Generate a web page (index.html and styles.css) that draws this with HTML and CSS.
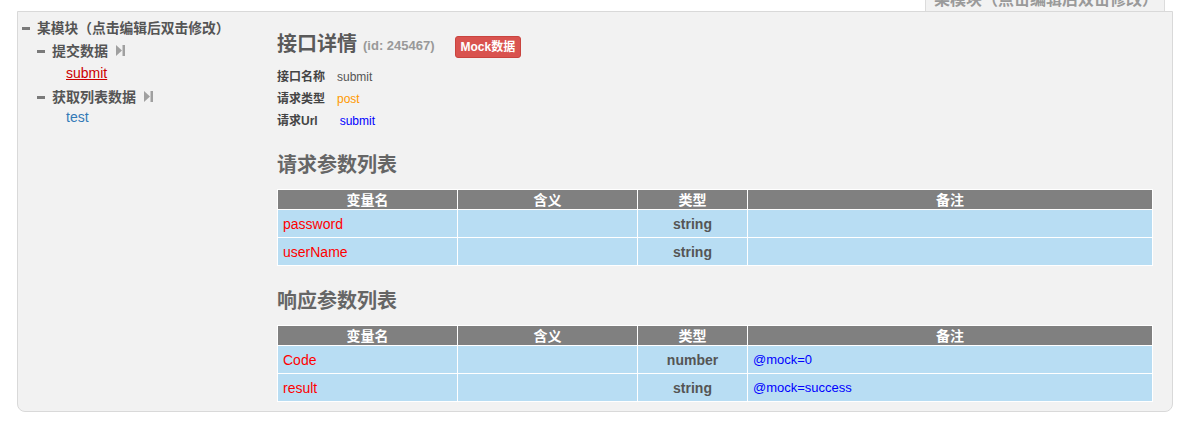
FILE: index.html
```html
<!DOCTYPE html>
<html lang="zh-CN">
<head>
<meta charset="utf-8">
<title>接口详情</title>
<link rel="stylesheet" href="styles.css">
</head>
<body>
<div class="wrap">
  <div class="tabs">
    <div class="tab">某模块（点击编辑后双击修改）</div>
  </div>
  <div class="panel">
    <div class="tree">
      <div class="node root"><span class="minus"></span>某模块（点击编辑后双击修改）</div>
      <div class="node group"><span class="minus"></span>提交数据<svg class="play" width="9" height="11" viewBox="0 0 9 11"><polygon points="0,0 6,5.5 0,11" fill="#a0a0a0"/><rect x="6.5" y="0" width="2.5" height="11" fill="#a0a0a0"/></svg></div>
      <div class="leaf"><a class="link active" href="#">submit</a></div>
      <div class="node group g2"><span class="minus"></span>获取列表数据<svg class="play" width="9" height="11" viewBox="0 0 9 11"><polygon points="0,0 6,5.5 0,11" fill="#a0a0a0"/><rect x="6.5" y="0" width="2.5" height="11" fill="#a0a0a0"/></svg></div>
      <div class="leaf last"><a class="link" href="#">test</a></div>
    </div>
    <div class="detail">
      <div class="title-row">
        <span class="title">接口详情</span>
        <span class="id">(id: 245467)</span>
        <span class="badge">Mock数据</span>
      </div>
      <div class="info">
        <div class="info-line"><span class="label">接口名称</span><span class="val name">submit</span></div>
        <div class="info-line"><span class="label">请求类型</span><span class="val method">post</span></div>
        <div class="info-line"><span class="label">请求Url</span><span class="val url">submit</span></div>
      </div>

      <h3 class="sec">请求参数列表</h3>
      <table class="params">
        <colgroup><col class="c1"><col class="c2"><col class="c3"><col class="c4"></colgroup>
        <thead><tr><th>变量名</th><th>含义</th><th>类型</th><th>备注</th></tr></thead>
        <tbody>
          <tr><td class="var">password</td><td></td><td class="type">string</td><td class="note"></td></tr>
          <tr><td class="var">userName</td><td></td><td class="type">string</td><td class="note"></td></tr>
        </tbody>
      </table>

      <h3 class="sec sec2">响应参数列表</h3>
      <table class="params">
        <colgroup><col class="c1"><col class="c2"><col class="c3"><col class="c4"></colgroup>
        <thead><tr><th>变量名</th><th>含义</th><th>类型</th><th>备注</th></tr></thead>
        <tbody>
          <tr><td class="var">Code</td><td></td><td class="type">number</td><td class="note">@mock=0</td></tr>
          <tr><td class="var">result</td><td></td><td class="type">string</td><td class="note">@mock=success</td></tr>
        </tbody>
      </table>
    </div>
  </div>
</div>
</body>
</html>
```
FILE: styles.css
```css
* { box-sizing: border-box; }
html, body { margin: 0; padding: 0; background: #fff; overflow: hidden; }
body {
  font-family: "Liberation Sans", "Noto Sans CJK SC", sans-serif;
  color: #555;
}
.wrap { margin: 0 5px 0 17px; }

.tabs {
  display: flex;
  justify-content: flex-end;
  padding-right: 8px;
  margin-top: -19px;
  height: 30px;
}
.tab {
  width: 240px;
  height: 30px;
  border: 1px solid #dcdcdc;
  border-bottom: none;
  background: #f2f2f2;
  color: #9a9a9a;
  font-size: 16px;
  font-weight: bold;
  line-height: 16px;
  padding: 10px 0 0 8px;
  white-space: nowrap;
  overflow: hidden;
}

.panel {
  display: flex;
  background: #f2f2f2;
  border: 1px solid #d9d9d9;
  border-radius: 0 0 8px 8px;
  height: 401px;
}

/* tree */
.tree {
  width: 259px;
  flex: none;
  padding: 6px 0 0 4px;
}
.node {
  font-weight: bold;
  color: #555;
  line-height: 22px;
  white-space: nowrap;
}
.root { font-size: 13.75px; }
.group { font-size: 14px; padding-left: 15px; }
.g2 { margin-top: 2px; }
.minus {
  display: inline-block;
  width: 8px;
  height: 3px;
  background: #7a7a7a;
  vertical-align: middle;
  margin: -2px 7px 0 0;
}
.play { margin-left: 8px; vertical-align: middle; margin-top: -3px; }
.leaf { padding-left: 44px; line-height: 22px; font-size: 14px; }
.leaf.last { line-height: 18px; }
.link { color: #337ab7; text-decoration: none; }
.link.active { color: #c00; text-decoration: underline; }

/* detail */
.detail {
  flex: 1;
  padding: 21px 19px 0 0;
}
.title-row {
  display: flex;
  align-items: flex-start;
  height: 22px;
}
.title {
  font-size: 20px;
  font-weight: bold;
  line-height: 22px;
  color: #5a5a5a;
}
.id {
  font-size: 13px;
  font-weight: bold;
  color: #999;
  line-height: 22px;
  margin: 2px 0 0 6px;
}
.badge {
  margin: 3px 0 0 20px;
  height: 22px;
  padding: 0 5px;
  background: #d9534f;
  color: #fff;
  font-size: 12px;
  font-weight: bold;
  line-height: 22px;
  border-radius: 3px;
  border: 1px solid #c9443f;
  display: flex;
  align-items: center;
}

.info { margin-top: 11px; }
.info-line { line-height: 22px; font-size: 12px; }
.label { font-weight: bold; color: #444; }
.val { margin-left: 12px; }
.name { color: #555; }
.method { color: #f90; }
.url { color: #00f; margin-left: 22px; }

.sec {
  margin: 21px 0 12px;
  font-size: 20px;
  line-height: 24px;
  font-weight: bold;
  color: #666;
}
.sec2 { margin-top: 23px; }

.params {
  width: 100%;
  table-layout: fixed;
  border-collapse: collapse;
  margin-bottom: 0;
}
.c1 { width: 180px; }
.c2 { width: 180px; }
.c3 { width: 110px; }
.params th, .params td { border: 1px solid #fff; padding: 0; }
.params th {
  background: #808080;
  color: #fff;
  font-size: 14px;
  font-weight: bold;
  height: 20px;
  line-height: 18px;
  text-align: center;
}
.params td {
  background: #b8ddf3;
  height: 28px;
  vertical-align: middle;
}
.var { color: #f00; font-size: 14px; padding-left: 5px !important; }
.type { text-align: center; font-weight: bold; font-size: 14px; color: #555; }
.note { color: #00f; font-size: 13px; padding-left: 5px !important; }
```
